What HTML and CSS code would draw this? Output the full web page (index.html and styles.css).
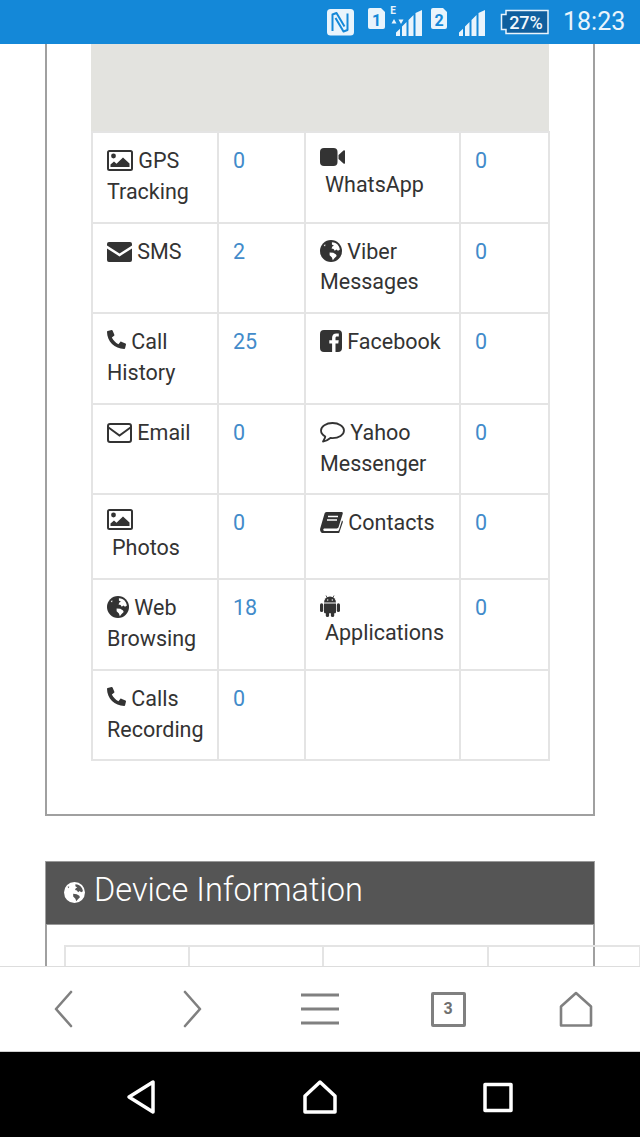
FILE: index.html
```html
<!DOCTYPE html>
<html lang="en">
<head>
<meta charset="utf-8">
<title>Device Information</title>
<link rel="stylesheet" href="styles.css">
</head>
<body>
<svg class="defs" width="0" height="0" aria-hidden="true">
  <symbol id="i-picture" viewBox="0 0 26 21">
    <rect x="1" y="1" width="24" height="19" rx="1.5" fill="none" stroke="currentColor" stroke-width="2"/>
    <circle cx="6.5" cy="6" r="2.4" fill="currentColor"/>
    <path d="M3.5 17v-2.5l3.5-3 2.500 2.200L16 7.500l6.500 6V17z" fill="currentColor"/>
  </symbol>
  <symbol id="i-envelope" viewBox="0 0 25 20">
    <path d="M2 0h21a2 2 0 0 1 2 2v1.600L12.500 11.500 0 3.600V2a2 2 0 0 1 2-2z" fill="currentColor"/>
    <path d="M0 6.400l12.500 8L25 6.400V18a2 2 0 0 1-2 2H2a2 2 0 0 1-2-2z" fill="currentColor"/>
  </symbol>
  <symbol id="i-envelope-o" viewBox="0 0 25 20">
    <rect x="1" y="1" width="23" height="18" rx="2" fill="none" stroke="currentColor" stroke-width="2"/>
    <path d="M1.500 4.500l11 8 11-8" fill="none" stroke="currentColor" stroke-width="2"/>
  </symbol>
  <symbol id="i-phone" viewBox="0 0 512 512">
    <path transform="translate(512 0) scale(-1 1)" d="M493.4 24.6l-104-24c-11.3-2.6-22.9 3.3-27.5 13.9l-48 112c-4.2 9.8-1.4 21.3 6.9 28l60.6 49.6c-36 76.7-98.9 140.5-177.2 177.2l-49.6-60.6c-6.8-8.3-18.2-11.1-28-6.9l-112 48C3.9 366.5-2 378.1.6 389.4l24 104C27.1 504.2 36.7 512 48 512c256.1 0 464-207.5 464-464 0-11.2-7.7-20.9-18.6-23.4z" fill="currentColor"/>
  </symbol>
  <symbol id="i-globe" viewBox="0 0 24 24">
    <circle cx="12" cy="12" r="12" fill="currentColor"/>
    <path d="M13 2.500c3 0 6 1.600 7.600 4.500.7 1.300 1 2.600 1 3.500l-2 1.200-1.700-1.300-1.800 1.400-1.300-2-2.200-.6.800-2.200 1.800-.6-2.200-1.500z" fill="var(--globe-land, #fff)"/>
    <path d="M10.500 13.500l4 .5 3 1.800.7 1.700-2.500 2.500-1.700 2-1-3-2.500-2.500z" fill="var(--globe-land, #fff)"/>
    <path d="M4 5.500l2-.5-.5 2z" fill="var(--globe-land, #fff)"/>
  </symbol>
  <symbol id="i-video" viewBox="0 0 25 18">
    <rect x="0" y="0" width="17.500" height="18" rx="4" fill="currentColor"/>
    <path d="M18.500 7l5-4.500c.7-.6 1.500-.2 1.500.6v11.800c0 .8-.8 1.200-1.500.6l-5-4.500z" fill="currentColor"/>
  </symbol>
  <symbol id="i-facebook" viewBox="0 0 22 22">
    <path fill-rule="evenodd" d="M4 0h14a4 4 0 0 1 4 4v14a4 4 0 0 1-4 4h-2.500v-8.500h2.800l.4-3.300h-3.200V8.100c0-1 .3-1.600 1.600-1.600h1.700V3.600c-.3 0-1.300-.1-2.500-.1-2.500 0-4.200 1.500-4.200 4.300v2.400H9.300v3.300h2.800V22H4a4 4 0 0 1-4-4V4a4 4 0 0 1 4-4z" fill="currentColor"/>
  </symbol>
  <symbol id="i-comment" viewBox="0 0 25 21">
    <path d="M12.500 1C6.200 1 1 4.200 1 8.500c0 2.500 1.700 4.600 4.300 6-.3 1.800-1.300 3.600-2.300 5 2.700-.3 5.500-1.900 7.400-3.500.7.100 1.400.1 2.100.1 6.300 0 11.500-3.300 11.500-7.600S18.800 1 12.500 1z" fill="none" stroke="currentColor" stroke-width="1.800" stroke-linejoin="round"/>
  </symbol>
  <symbol id="i-book" viewBox="0 0 23 21">
    <path d="M6.500 0h15c1 0 1.500.8 1.200 1.800l-4 13c-.3 1-1 1.700-2 1.700H4.500c-1.500 0-1.800 2.500 0 2.500h13.200c.6 0 1.100-.3 1.300-1l3-9.500c.7.300 1 1 .8 1.800l-3.200 9.500c-.3 1.200-1.200 2.200-2.400 2.200H3.500C1.300 21-.5 19 .2 16.500L4.500 1.800C4.800.7 5.500 0 6.500 0z" fill="currentColor"/>
    <path d="M8 4.500h10M7 8h10" stroke="var(--globe-land, #fff)" stroke-width="1.400"/>
  </symbol>
  <symbol id="i-android" viewBox="0 0 20 22">
    <path d="M4 7.500a6 6 0 0 1 12 0z" fill="currentColor"/>
    <path d="M6 .5l1.500 3M14 .5l-1.500 3" stroke="currentColor" stroke-width=".8"/>
    <path d="M4 8.500h12v8.500c0 .8-.6 1.300-1.300 1.300H5.300C4.600 18.300 4 17.800 4 17z" fill="currentColor"/>
    <rect x="0" y="8.300" width="3.200" height="8.700" rx="1.600" fill="currentColor"/>
    <rect x="16.800" y="8.300" width="3.200" height="8.700" rx="1.600" fill="currentColor"/>
    <rect x="5.800" y="16" width="3.300" height="6" rx="1.600" fill="currentColor"/>
    <rect x="10.900" y="16" width="3.300" height="6" rx="1.600" fill="currentColor"/>
    <circle cx="7.700" cy="5" r=".7" fill="#fff"/><circle cx="12.300" cy="5" r=".7" fill="#fff"/>
  </symbol>
  <symbol id="i-signal" viewBox="0 0 26 26">
    <path d="M0 26v-3.500L4 18.800V26zM6 26v-9.500l4.500-4.500v14zM12.500 26V10l5-5v21zM19.500 26V3L26 0v26z" fill="currentColor"/>
  </symbol>
</svg>

<header class="status">
  <svg class="st st-nfc" width="28" height="44" viewBox="0 0 28 44">
    <rect x="1" y="9" width="27" height="26.500" rx="3.500" fill="#e9f4fc"/>
    <path d="M6.500 31V14.500l4-1.500 8 13.500M21.500 13.500V30l-4 1.500-8-13.500" fill="none" stroke="#1488d8" stroke-width="2" stroke-linejoin="round"/>
  </svg>
  <svg class="st st-sim" width="54" height="44" viewBox="0 0 54 44">
    <path d="M2 8h11l4 4v15a2 2 0 0 1-2 2H2a2 2 0 0 1-2-2V10a2 2 0 0 1 2-2z" fill="#e9f4fc"/>
    <text x="8.500" y="25.500" class="sim-num">1</text>
    <text x="25" y="14" class="sim-e">E</text>
    <path d="M26 19l2.500 4.500h-5zM33 24l-2.500-4.500h5z" fill="#e9f4fc"/>
    <use href="#i-signal" x="28" y="10" width="26" height="26" class="ico-light"/>
  </svg>
  <svg class="st st-sim2" width="54" height="44" viewBox="0 0 54 44">
    <path d="M2 8h10l4 4v15a2 2 0 0 1-2 2H2a2 2 0 0 1-2-2V10a2 2 0 0 1 2-2z" fill="#e9f4fc"/>
    <text x="8" y="25.500" class="sim-num">2</text>
    <use href="#i-signal" x="28" y="10" width="26" height="26" class="ico-light"/>
  </svg>
  <svg class="st st-batt" width="49" height="44" viewBox="0 0 49 44">
    <path d="M6 10.500h42v23H6v-4H1.500v-15H6z" fill="#0f5f9e" stroke="#e9f4fc" stroke-width="1.500"/>
    <text x="26" y="28.500" class="batt-num">27%</text>
  </svg>
  <span class="clock">18:23</span>
</header>

<main class="page">
  <section class="card">
    <div class="placeholder"></div>
    <table class="stats">
      <colgroup><col class="c1"><col class="c2"><col class="c3"><col class="c4"></colgroup>
      <tr>
        <td><svg class="ic ic-pic"><use href="#i-picture"/></svg> GPS Tracking</td>
        <td><a class="num">0</a></td>
        <td><svg class="ic ic-video ic-block"><use href="#i-video"/></svg><span class="indent">WhatsApp</span></td>
        <td><a class="num">0</a></td>
      </tr>
      <tr>
        <td><svg class="ic ic-env"><use href="#i-envelope"/></svg> SMS</td>
        <td><a class="num">2</a></td>
        <td><svg class="ic ic-globe"><use href="#i-globe"/></svg> Viber Messages</td>
        <td><a class="num">0</a></td>
      </tr>
      <tr>
        <td><svg class="ic ic-phone"><use href="#i-phone"/></svg> Call History</td>
        <td><a class="num">25</a></td>
        <td><svg class="ic ic-fb"><use href="#i-facebook"/></svg> Facebook</td>
        <td><a class="num">0</a></td>
      </tr>
      <tr>
        <td><svg class="ic ic-env"><use href="#i-envelope-o"/></svg> Email</td>
        <td><a class="num">0</a></td>
        <td><svg class="ic ic-comment"><use href="#i-comment"/></svg> Yahoo Messenger</td>
        <td><a class="num">0</a></td>
      </tr>
      <tr>
        <td><svg class="ic ic-pic ic-block"><use href="#i-picture"/></svg><span class="indent">Photos</span></td>
        <td><a class="num">0</a></td>
        <td><svg class="ic ic-book"><use href="#i-book"/></svg> Contacts</td>
        <td><a class="num">0</a></td>
      </tr>
      <tr>
        <td><svg class="ic ic-globe"><use href="#i-globe"/></svg> Web Browsing</td>
        <td><a class="num">18</a></td>
        <td><svg class="ic ic-android ic-block"><use href="#i-android"/></svg><span class="indent">Applications</span></td>
        <td><a class="num">0</a></td>
      </tr>
      <tr>
        <td><svg class="ic ic-phone"><use href="#i-phone"/></svg> Calls Recording</td>
        <td><a class="num">0</a></td>
        <td></td>
        <td></td>
      </tr>
    </table>
  </section>

  <section class="panel">
    <h2 class="panel-head"><svg class="ic-head"><use href="#i-globe"/></svg> Device Information</h2>
    <div class="panel-body">
      <table class="device">
        <colgroup><col class="d1"><col class="d2"><col class="d3"><col class="d4"><col class="d5"></colgroup>
        <tr><td></td><td></td><td>Manufacturer</td><td>Android</td><td></td></tr>
      </table>
    </div>
  </section>
</main>

<nav class="toolbar">
  <div class="tool"><svg width="20" height="38" viewBox="0 0 20 38"><path d="M17 2L2 19l15 17" class="tb"/></svg></div>
  <div class="tool"><svg width="20" height="38" viewBox="0 0 20 38"><path d="M3 2l15 17L3 36" class="tb"/></svg></div>
  <div class="tool"><svg width="40" height="32" viewBox="0 0 40 32"><path d="M1 2h38M1 16h38M1 30h38" class="tb tb-flat"/></svg></div>
  <div class="tool"><span class="tabs">3</span></div>
  <div class="tool"><svg width="36" height="38" viewBox="0 0 36 38"><path d="M3 35.500V16.500L18 3l15 13.500v19z" class="tb"/></svg></div>
</nav>

<nav class="softkeys">
  <div class="key"><svg width="32" height="38" viewBox="0 0 32 38"><path d="M27 4v30L3 19z" class="sk"/></svg></div>
  <div class="key"><svg width="38" height="38" viewBox="0 0 38 38"><path d="M4 34V18L19 4l15 14v16z" class="sk"/></svg></div>
  <div class="key"><svg width="32" height="32" viewBox="0 0 32 32"><rect x="3" y="3.500" width="26" height="26" class="sk"/></svg></div>
</nav>
</body>
</html>
```

FILE: styles.css
```css
* { box-sizing: border-box; }

html, body { margin: 0; padding: 0; }

body {
  width: 640px;
  height: 1137px;
  overflow: hidden;
  display: flex;
  flex-direction: column;
  background: #fff;
  color: #333;
  font-family: Roboto, "Liberation Sans", sans-serif;
  font-size: 21.5px;
  line-height: 30.8px;
}

.defs { position: absolute; }

/* status bar */
.status {
  flex: 0 0 44px;
  display: flex;
  align-items: center;
  padding: 0 15px 0 326px;
  background: #1488d8;
  color: #e9f4fc;
}
.st { display: block; flex: none; }
.st-nfc { margin-right: 14px; }
.st-sim { margin-right: 9px; }
.st-sim2 { margin-right: 15px; }
.st-batt { margin-right: 14px; }
.ico-light { color: #e9f4fc; }
.sim-num { font: 700 16px Roboto, sans-serif; fill: #1488d8; text-anchor: middle; }
.sim-e { font: 700 10px Roboto, sans-serif; fill: #e9f4fc; text-anchor: middle; }
.batt-num { font: 500 18px Roboto, sans-serif; fill: #f2f8fd; text-anchor: middle; }
.clock { font-size: 25px; line-height: 44px; white-space: nowrap; }

/* scrolled page */
.page {
  flex: 1 1 0;
  min-height: 0;
  overflow: hidden;
}

.card {
  margin: 0 45px;
  padding: 0 44px 53px;
  border: 2px solid #a0a0a0;
  border-top: 0;
}
.placeholder { height: 87px; background: #e3e3df; }

table { border-collapse: collapse; table-layout: fixed; }

.stats { width: 457px; }
.c1 { width: 126px; }
.c2 { width: 87px; }
.c3 { width: 155px; }
.c4 { width: 89px; }

td {
  padding: 13px 14px 14px;
  border: 2px solid #e4e4e4;
  vertical-align: top;
}

.num { color: #428bca; }
.indent { display: block; padding-left: 5px; }

.ic { display: inline-block; vertical-align: -3px; color: #333; --globe-land: #fff; }
.ic-block { display: block; margin-top: 2px; }
.ic-pic { width: 26px; height: 21px; }
.ic-pic.ic-block { margin-top: 1px; margin-bottom: 3px; }
.ic-env { width: 25px; height: 20px; }
.ic-phone { width: 19px; height: 19px; vertical-align: 0; }
.ic-globe { width: 22px; height: 22px; }
.ic-video { width: 25px; height: 18px; margin-bottom: 4px; }
.ic-fb { width: 22px; height: 22px; }
.ic-comment { width: 25px; height: 21px; }
.ic-book { width: 23px; height: 21px; }
.ic-android { width: 20px; height: 22px; margin-bottom: 1px; }

/* device panel */
.panel {
  margin: 45px 45px 0;
  border: solid #a0a0a0;
  border-width: 0 2px;
}
.panel-head {
  display: flex;
  align-items: center;
  gap: 9px;
  height: 64px;
  margin: 0 -1px;
  padding: 0 0 5px 18px;
  background: #555;
  border-top: 1px solid #999;
  border-bottom: 1px solid #999;
  color: #fff;
  font-size: 32.5px;
  font-weight: 300;
  white-space: nowrap;
}
.ic-head { width: 21px; height: 21px; color: #fff; --globe-land: #555; flex: none; margin-top: 3px; }
.panel-body { padding: 20px 17px 0; }
.device { width: 640px; }
.d1 { width: 124px; }
.d2 { width: 134px; }
.d3 { width: 165px; }
.d4 { width: 152px; }
.d5 { width: 65px; }
.device td { height: 100px; padding-top: 14px; white-space: nowrap; }

/* browser toolbar */
.toolbar {
  flex: 0 0 86px;
  display: grid;
  grid-template-columns: repeat(5, 128px);
  background: #fff;
  border-top: 1px solid #ddd;
  border-bottom: 1px solid #cfcfcf;
  position: relative;
}
.tool { display: flex; align-items: center; justify-content: center; }
.tb { fill: none; stroke: #808080; stroke-width: 2.6; stroke-linejoin: round; stroke-linecap: round; }
.tb-flat { stroke-width: 3; stroke-linecap: butt; }
.tabs {
  width: 35px;
  height: 35px;
  display: flex;
  align-items: center;
  justify-content: center;
  border: 3px solid #808080;
  border-radius: 2px;
  color: #707070;
  font-size: 16px;
  font-weight: 700;
  line-height: 1;
}

/* android soft keys */
.softkeys {
  flex: 0 0 85px;
  display: flex;
  justify-content: center;
  padding-top: 4px;
  background: #000;
}
.key { width: 178px; display: flex; align-items: center; justify-content: center; }
.sk { fill: none; stroke: #fff; stroke-width: 3.5; stroke-linejoin: round; }
```
